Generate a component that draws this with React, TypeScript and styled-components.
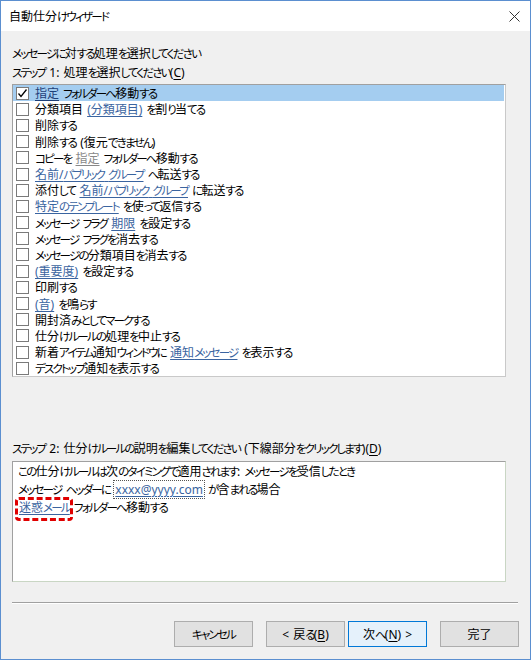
import React from "react";
import styled, { createGlobalStyle } from "styled-components";

const GlobalStyle = createGlobalStyle`
  html, body { margin: 0; padding: 0; background: #f0f0f0; }
  body {
    font-family: "Noto Sans", "Noto Sans CJK JP", sans-serif;
    font-size: 12px;
    color: #000;
  }
  * { box-sizing: border-box; }
`;

const Window = styled.div`
  width: 531px;
  height: 660px;
  border: 1px solid #5b8fd0;
  background: #f0f0f0;
  display: flex;
  flex-direction: column;
  font-feature-settings: "palt";
  word-spacing: 1px;
  overflow: hidden;
`;

const Kana = styled.span`
  font-size: 11.5px;
  letter-spacing: -1.8px;
`;

const KANA_RE = /([\u3040-\u30ff\u31f0-\u31ff]+)/;

const Jp = ({ text }: { text: string }) => (
  <>
    {text.split(KANA_RE).map((p, i) =>
      i % 2 === 1 ? <Kana key={i}>{p}</Kana> : <React.Fragment key={i}>{p}</React.Fragment>
    )}
  </>
);

const TitleBar = styled.div`
  height: 30px;
  flex: 0 0 30px;
  background: #fff;
  display: flex;
  align-items: center;
  justify-content: space-between;
  padding: 0 10px 0 8px;
  font-size: 12px;
  color: #000;
`;

const CloseIcon = styled.svg`
  width: 11px;
  height: 11px;
  margin-top: 1px;
`;

const Body = styled.div`
  flex: 1;
  display: flex;
  flex-direction: column;
  padding: 13px 0 0 11px;
`;

const Label = styled.div<{ $mt?: number }>`
  height: 19px;
  line-height: 19px;
  white-space: nowrap;
  margin-top: ${(p) => p.$mt ?? 0}px;
`;

const Mnemonic = styled.span`
  text-decoration: underline;
  text-underline-offset: 2px;
`;

const ListBox = styled.div`
  width: 494px;
  height: 293px;
  margin-top: 2px;
  background: #fff;
  border: 1px solid #c9c9c9;
  border-left-color: #a0a0a0;
  border-top-color: #a0a0a0;
  display: flex;
  flex-direction: column;
`;

const Row = styled.div<{ $selected?: boolean }>`
  height: 16.2px;
  flex: 0 0 16.2px;
  display: flex;
  align-items: center;
  padding-left: 3px;
  margin-right: 1px;
  background: ${(p) => (p.$selected ? "#a4cdf0" : "transparent")};
  white-space: nowrap;
`;

const Box = styled.span`
  width: 13px;
  height: 13px;
  flex: 0 0 13px;
  border: 1px solid #7a7a7a;
  background: #fff;
  margin-right: 6px;
  display: inline-flex;
  align-items: center;
  justify-content: center;
`;

const Link = styled.span<{ $tone?: "sel" | "gray" | "blue" }>`
  color: ${(p) =>
    p.$tone === "sel" ? "#1e3f78" : p.$tone === "gray" ? "#888" : "#3a64a0"};
  text-decoration: underline;
  text-underline-offset: 2px;
  text-decoration-thickness: 1px;
`;

const DescBox = styled.div`
  width: 494px;
  height: 121px;
  margin-top: 3px;
  background: #fff;
  border: 1px solid #c9d6c4;
  border-left-color: #a0a0a0;
  border-top-color: #a0a0a0;
  padding: 1px 0 0 5px;
  display: flex;
  flex-direction: column;
`;

const DescLine = styled.div`
  height: 18px;
  line-height: 18px;
  white-space: nowrap;
`;

const FocusLink = styled(Link)`
  outline: 1px dotted #555;
  outline-offset: 0px;
  padding: 0 1px;
`;

const Annot = styled.span`
  position: relative;
  display: inline-block;
  margin-left: 1px;
  &::before {
    content: "";
    position: absolute;
    left: -4px;
    right: -3px;
    top: -2px;
    bottom: -4px;
    border: 3px dashed #e00000;
    border-radius: 4px;
  }
`;

const Separator = styled.div`
  width: 506px;
  height: 2px;
  margin-top: 20px;
  border-top: 1px solid #a0a0a0;
  border-bottom: 1px solid #fff;
`;

const ButtonRow = styled.div`
  display: flex;
  margin-top: 17px;
  padding-left: 162px;
`;

const Button = styled.button<{ $default?: boolean; $gap?: number }>`
  width: 79px;
  height: 26px;
  margin-left: ${(p) => p.$gap ?? 0}px;
  font-family: inherit;
  font-size: 12px;
  word-spacing: 1px;
  font-feature-settings: "palt";
  color: #000;
  background: ${(p) => (p.$default ? "#e5f1fb" : "#e1e1e1")};
  border: 1px solid ${(p) => (p.$default ? "#0078d7" : "#adadad")};
  padding: 0;
  display: flex;
  align-items: center;
  justify-content: center;
  white-space: pre;
`;

type Seg = string | { l: string; tone?: "sel" | "gray" | "blue" };

const rows: Seg[][] = [
  [{ l: "指定", tone: "sel" }, " フォルダーへ移動する"],
  ["分類項目 ", { l: "(分類項目)" }, " を割り当てる"],
  ["削除する"],
  ["削除する (復元できません)"],
  ["コピーを ", { l: "指定", tone: "gray" }, " フォルダーへ移動する"],
  [{ l: "名前/パブリック グループ" }, " へ転送する"],
  ["添付して ", { l: "名前/パブリック グループ" }, " に転送する"],
  [{ l: "特定のテンプレート" }, " を使って返信する"],
  ["メッセージ フラグ ", { l: "期限" }, " を設定する"],
  ["メッセージ フラグを消去する"],
  ["メッセージの分類項目を消去する"],
  [{ l: "(重要度)" }, " を設定する"],
  ["印刷する"],
  [{ l: "(音)" }, " を鳴らす"],
  ["開封済みとしてマークする"],
  ["仕分けルールの処理を中止する"],
  ["新着アイテム通知ウィンドウに ", { l: "通知メッセージ" }, " を表示する"],
  ["デスクトップ通知を表示する"],
];

const Check = () => (
  <svg width="11" height="11" viewBox="0 0 11 11">
    <path d="M1.5 5.5 L4 8.5 L9.5 1.5" fill="none" stroke="#000" strokeWidth="1.3" />
  </svg>
);

export default function App() {
  return (
    <>
      <GlobalStyle />
      <Window>
        <TitleBar>
          <span>
            <Jp text="自動仕分けウィザード" />
          </span>
          <CloseIcon viewBox="0 0 11 11">
            <path d="M0.5 0.5 L10.5 10.5 M10.5 0.5 L0.5 10.5" stroke="#333" strokeWidth="1" />
          </CloseIcon>
        </TitleBar>
        <Body>
          <Label>
            <Jp text="メッセージに対する処理を選択してください" />
          </Label>
          <Label>
            <Jp text="ステップ 1: 処理を選択してください(" />
            <Mnemonic>C</Mnemonic>)
          </Label>
          <ListBox>
            {rows.map((segs, i) => (
              <Row key={i} $selected={i === 0}>
                <Box>{i === 0 && <Check />}</Box>
                <span>
                  {segs.map((s, j) =>
                    typeof s === "string" ? (
                      <Jp key={j} text={s} />
                    ) : (
                      <Link key={j} $tone={s.tone}>
                        <Jp text={s.l} />
                      </Link>
                    )
                  )}
                </span>
              </Row>
            ))}
          </ListBox>
          <Label $mt={62}>
            <Jp text="ステップ 2: 仕分けルールの説明を編集してください (下線部分をクリックします)(" />
            <Mnemonic>D</Mnemonic>)
          </Label>
          <DescBox>
            <DescLine>
              <Jp text="この仕分けルールは次のタイミングで適用されます: メッセージを受信したとき" />
            </DescLine>
            <DescLine>
              <Jp text="メッセージ ヘッダーに " />
              <FocusLink>xxxx@yyyy.com</FocusLink>
              <Jp text=" が含まれる場合" />
            </DescLine>
            <DescLine>
              <Annot>
                <Link>
                  <Jp text="迷惑メール" />
                </Link>
              </Annot>
              <Jp text=" フォルダーへ移動する" />
            </DescLine>
          </DescBox>
          <Separator />
          <ButtonRow>
            <Button>
              <Jp text="キャンセル" />
            </Button>
            <Button $gap={13}>
              <Jp text="< 戻る(" />
              <Mnemonic>B</Mnemonic>)
            </Button>
            <Button $gap={3} $default>
              <Jp text="次へ(" />
              <Mnemonic>N</Mnemonic>) &gt;
            </Button>
            <Button $gap={13}>完了</Button>
          </ButtonRow>
        </Body>
      </Window>
    </>
  );
}
